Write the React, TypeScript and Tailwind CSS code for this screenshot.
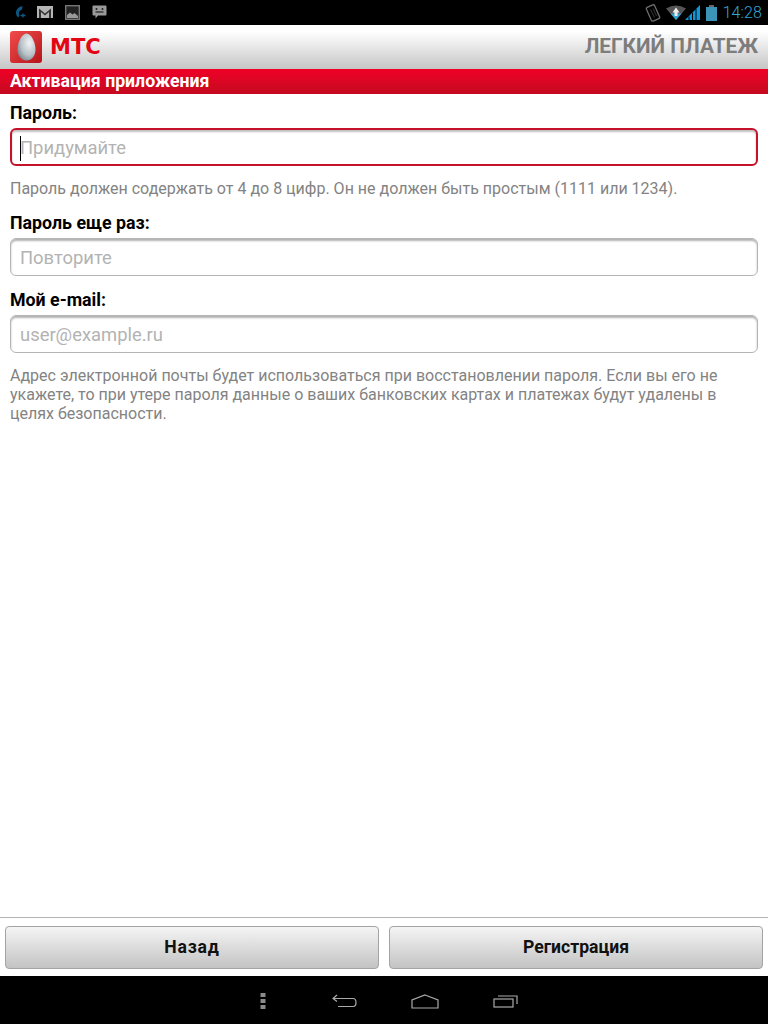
import { ReactNode } from "react";

const StatusBar = () => (
  <div className="h-[25px] bg-black flex items-center justify-between pl-[14px] pr-[6px] shrink-0">
    <div className="flex items-center gap-[12px] mt-[-1px]">
      <svg width="12" height="14" viewBox="0 0 12 14" fill="none" className="mr-[-1px]">
        <path d="M8.500 1C5 1.500 2.500 4 2 7C1.800 9 2.500 11 4 12.500L5.500 10.500C4.500 9.500 4.500 7.500 5.500 6L8 4.500Z" fill="#0a5a85" />
        <path d="M6.500 10.500h5M9 8.500v4" stroke="#0a5a85" strokeWidth="1.400" />
      </svg>
      <svg width="16" height="12" viewBox="0 0 16 12">
        <rect width="16" height="12" fill="#b5b5b5" />
        <path d="M2 12V2.500L8 7.500L14 2.500V12H12V6L8 9.500L4 6V12Z" fill="#333" />
      </svg>
      <svg width="15" height="15" viewBox="0 0 15 15">
        <rect x="0.700" y="0.700" width="13.600" height="13.600" fill="#222" stroke="#777" strokeWidth="1.400" />
        <path d="M2 13V10L5 7.500L7.500 9.500L9.500 8L13 11V13Z" fill="#999" />
      </svg>
      <svg width="15" height="14" viewBox="0 0 15 14">
        <path d="M1.500 0.500H13.500Q14.500 0.500 14.500 1.500V9.500Q14.500 10.500 13.500 10.500H6L3.500 13.500V10.500H1.500Q0.500 10.500 0.500 9.500V1.500Q0.500 0.500 1.500 0.500Z" fill="#999" />
        <circle cx="4.500" cy="4" r="1" fill="#222" />
        <circle cx="10.500" cy="4" r="1" fill="#222" />
        <path d="M3.500 7H11.500" stroke="#222" strokeWidth="1.200" />
      </svg>
    </div>
    <div className="flex items-center">
      <svg width="16" height="18" viewBox="0 0 16 18" fill="none" className="mr-[5px]">
        <rect x="3.500" y="1.500" width="9" height="15" rx="1.500" transform="rotate(-24 8 9)" stroke="#6e6e6e" strokeWidth="1.300" />
        <path d="M5.500 5.500L9.500 13.500M8 4.500L11.500 12" stroke="#3c3c3c" strokeWidth="0.900" />
      </svg>
      <svg width="20" height="15" viewBox="0 0 20 15" className="mr-[-1px]">
        <path d="M0 3.500Q10 -2.500 20 3.500L10 15Z" fill="#555" />
        <path d="M4.500 8.500H15.500L10 15Z" fill="#33a3d3" />
        <path d="M10 2.500L13.500 7.500H11.500V11H8.500V7.500H6.500Z" fill="#eee" />
      </svg>
      <svg width="15" height="15" viewBox="0 0 15 15" className="mr-[6px]">
        <path d="M0 15L15 0V15Z" fill="#0f97d8" />
        <path d="M4 11.500V15M7.500 8V15M11 4V15" stroke="#000" strokeWidth="1" />
      </svg>
      <svg width="11" height="16" viewBox="0 0 11 16" className="mr-[6px]">
        <rect x="3" y="0" width="5" height="2" fill="#666" />
        <rect x="0" y="2" width="11" height="14" fill="#3b94b8" />
      </svg>
      <span className="font-light text-[16px] text-[#33a5d5] tracking-[0.1px]">14:28</span>
    </div>
  </div>
);

const Header = () => (
  <div className="h-[44px] shrink-0 bg-gradient-to-b from-white from-15% to-[#c6c6c6] flex items-center justify-between pl-[10px] pr-[10px]">
    <div className="flex items-center gap-[8px]">
      <div className="w-[32px] h-[32px] rounded-[3px] bg-gradient-to-br from-[#f24b4b] to-[#b5101a] flex items-center justify-center">
        <svg width="19" height="28" viewBox="0 0 19 28">
          <defs>
            <radialGradient id="egg" cx="0.650" cy="0.350" r="0.750">
              <stop offset="0" stopColor="#f0f3f5" />
              <stop offset="0.600" stopColor="#b9c3c9" />
              <stop offset="1" stopColor="#78858e" />
            </radialGradient>
          </defs>
          <path d="M9.500 0.500C14 0.500 18.500 9 18.500 16.500C18.500 23 14.500 27.500 9.500 27.500C4.500 27.500 0.500 23 0.500 16.500C0.500 9 5 0.500 9.500 0.500Z" fill="url(#egg)" />
        </svg>
      </div>
      <span className="font-['DejaVu_Sans',sans-serif] font-bold text-[21px] leading-none text-[#e30613]">МТС</span>
    </div>
    <span className="font-bold text-[20.8px] text-[#7d7d7d]">ЛЕГКИЙ ПЛАТЕЖ</span>
  </div>
);

const Field = ({ label, placeholder, focused }: { label: string; placeholder: string; focused?: boolean }) => (
  <div>
    <div className="text-[17.8px] leading-[26px] font-bold text-black">{label}</div>
    <div
      className={
        focused
          ? "mt-[2px] h-[38px] rounded-[6px] border-2 border-[#c4122a] shadow-[inset_0_2px_2px_rgba(0,0,0,0.25)] flex items-center pt-[2px] pl-[8px] text-[18.4px] text-[#b3b3b3]"
          : "mt-[2px] h-[38px] rounded-[6px] border border-[#b5b5b5] shadow-[inset_0_2px_2px_rgba(0,0,0,0.3)] flex items-center pt-[2px] pl-[9px] text-[18.4px] text-[#b3b3b3]"
      }
    >
      {focused && <span className="w-[1px] h-[25px] bg-black mr-[-1px]" />}
      {placeholder}
    </div>
  </div>
);

const Hint = ({ children }: { children: ReactNode }) => (
  <p className="text-[16px] leading-[19px] text-[#838383]">{children}</p>
);

const FooterButton = ({ children }: { children: ReactNode }) => (
  <button className="flex-1 h-[43px] rounded-[4px] border border-[#a3a3a3] bg-gradient-to-b from-[#f5f5f5] to-[#c3c3c3] text-[17.6px] font-bold text-[#111]">
    {children}
  </button>
);

const NavBar = () => (
  <div className="h-[48px] shrink-0 bg-black flex items-center justify-center">
    <div className="flex items-center ml-[10px] mt-[2px]">
      <svg width="6" height="18" viewBox="0 0 6 18" className="mr-[66px]">
        <rect x="0.500" y="1" width="5" height="4" fill="#8a8a8a" />
        <rect x="0.500" y="7" width="5" height="4" fill="#8a8a8a" />
        <rect x="0.500" y="13" width="5" height="4" fill="#8a8a8a" />
      </svg>
      <svg width="26" height="14" viewBox="0 0 26 14" fill="none" stroke="#aaa" strokeWidth="1.200" className="mr-[53px]">
        <path d="M5 1L1 4.500L5 7.500M1 4.500H21C25 4.500 25 12.500 21 12.500H6" />
      </svg>
      <svg width="28" height="15" viewBox="0 0 28 15" fill="none" stroke="#aaa" strokeWidth="1.200" className="mr-[54px]">
        <path d="M14 1L27 6V14H1V6Z" />
      </svg>
      <svg width="25" height="14" viewBox="0 0 25 14" fill="none" stroke="#aaa" strokeWidth="1.200">
        <rect x="1" y="5" width="19" height="8" />
        <path d="M5 2H24V10" />
      </svg>
    </div>
  </div>
);

export default function App() {
  return (
    <div className="w-[768px] h-[1024px] flex flex-col bg-white font-['Roboto',sans-serif]">
      <StatusBar />
      <Header />
      <div className="h-[25px] shrink-0 bg-gradient-to-b from-[#f00026] to-[#c40a20] flex items-center pl-[10px] text-[17.7px] font-bold text-white">
        Активация приложения
      </div>
      <div className="flex-1 flex flex-col px-[10px] pt-[6px]">
        <Field label="Пароль:" placeholder="Придумайте" focused />
        <div className="mt-[13px]">
          <Hint>Пароль должен содержать от 4 до 8 цифр. Он не должен быть простым (1111 или 1234).</Hint>
        </div>
        <div className="mt-[12px]">
          <Field label="Пароль еще раз:" placeholder="Повторите" />
        </div>
        <div className="mt-[11px]">
          <Field label="Мой e-mail:" placeholder="user@example.ru" />
        </div>
        <div className="mt-[13px]">
          <Hint>
            Адрес электронной почты будет использоваться при восстановлении пароля. Если вы его не укажете, то при утере пароля данные о ваших банковских картах и платежах будут удалены в целях безопасности.
          </Hint>
        </div>
      </div>
      <div className="h-[59px] shrink-0 border-t border-[#b5b5b5] flex gap-[10px] px-[5px] pt-[8px]">
        <FooterButton>
          <span className="tracking-[0.8px]">Назад</span>
        </FooterButton>
        <FooterButton>Регистрация</FooterButton>
      </div>
      <NavBar />
    </div>
  );
}
